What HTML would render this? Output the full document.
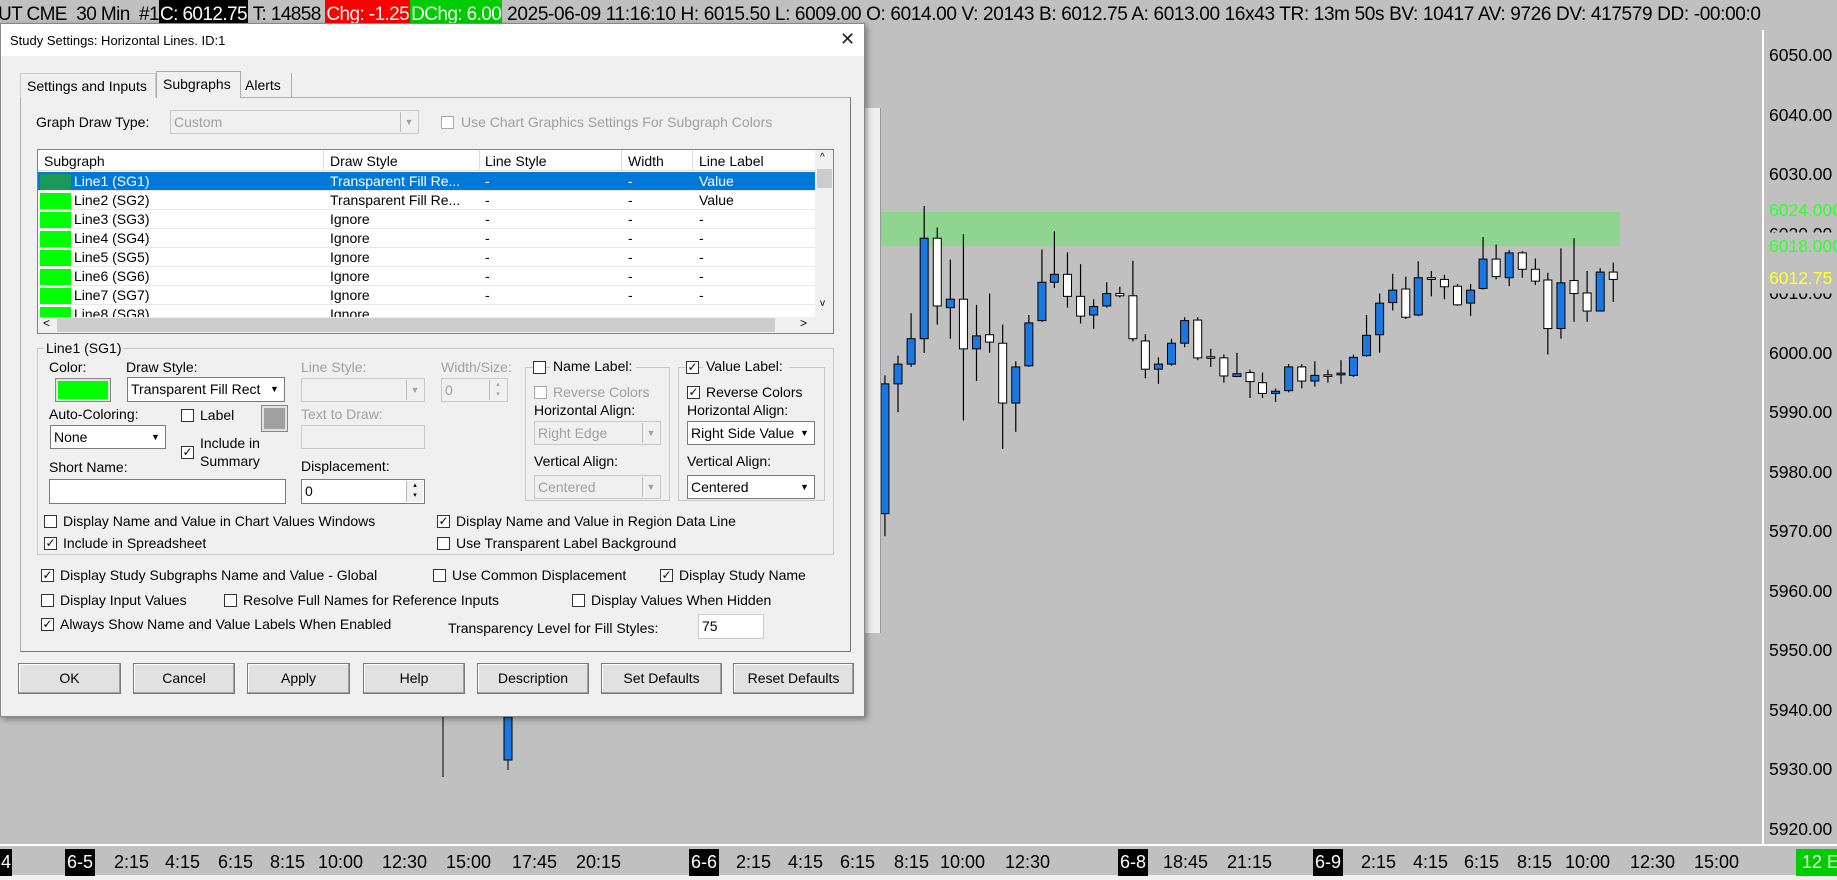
<!DOCTYPE html>
<html><head><meta charset="utf-8">
<style>
*{box-sizing:border-box;margin:0;padding:0}
body{width:1837px;height:880px;overflow:hidden;background:#c0c0c0;font-family:"Liberation Sans",sans-serif;position:relative}
.a{position:absolute;white-space:nowrap}
.topl{position:absolute;left:-2px;top:0;height:30px;font-size:19px;line-height:30px;white-space:nowrap;width:1763px;overflow:hidden}
.topl span{display:inline-block;height:30px}
.px{font-size:17.5px;color:#000}
.tl{font-size:18px;top:852px;color:#000}
.dlg{position:absolute;left:0;top:23px;width:865px;height:694px;background:#f0f0f0;border:1px solid #888;box-shadow:2px 2px 6px rgba(0,0,0,.4)}
.d{font-size:14px;color:#000}
.g{color:#a0a0a0}
.cb{position:absolute;width:13px;height:13px;border:1px solid #333;background:#fff;font-size:12px;line-height:11px;text-align:center}
.cbg{border-color:#aaa}
.box{position:absolute;background:#fff;border:1px solid #7a7a7a;font-size:14px;line-height:22px;padding-left:3px}
.dis{background:#f0f0f0;border-color:#c8c8c8;color:#a0a0a0}
.arr{position:absolute;right:1px;top:1px;bottom:1px;width:17px;background:#f0f0f0;border-left:1px solid #bbb;font-size:9px;text-align:center;line-height:20px}
.btn{position:absolute;top:663px;height:31px;background:#e1e1e1;border:1px solid #7a7a7a;box-shadow:inset -1px -1px 0 #a0a0a0,inset 1px 1px 0 #fff;font-size:14px;text-align:center;line-height:29px}
.row{position:absolute;left:38px;width:777px;height:19px;font-size:14px;line-height:19px;border-bottom:1px solid #e8e8e8}
.row span{position:absolute}
.sw{position:absolute;left:2px;top:2px;width:31px;height:16px;background:#00ff00}
</style></head><body>
<svg class="a" style="left:0;top:0" width="1837" height="880" id="ch">
<rect x="881" y="212" width="739" height="34" fill="#8fd48f"/>
<line x1="1763" y1="30" x2="1763" y2="845" stroke="#fff" stroke-width="2"/>
<line x1="0" y1="845" x2="1837" y2="845" stroke="#fff" stroke-width="2"/>
<rect x="0" y="875" width="1837" height="5" fill="#f0f0f0"/>
<line x1="443" y1="717" x2="443" y2="777" stroke="#000"/>
<line x1="508" y1="717" x2="508" y2="770" stroke="#000"/>
<rect x="504" y="717" width="8" height="43" fill="#1b78e0" stroke="#000"/>
</svg>
<!-- top bar -->
<div class="topl"><span style="letter-spacing:-0.6px">UT CME&nbsp; 30 Min&nbsp; #1</span><span style="background:#000;color:#fff;letter-spacing:-0.6px;padding:0 1px">C: 6012.75</span><span style="letter-spacing:-0.6px">&nbsp;T: 14858&nbsp;</span><span style="background:#f00;color:#fff;letter-spacing:-0.6px;padding:0 1px">Chg: -1.25</span><span style="background:#0c0;color:#fff;letter-spacing:-0.6px;padding:0 1px">DChg: 6.00</span><span style="letter-spacing:-0.35px">&nbsp;2025-06-09 11:16:10 H: 6015.50 L: 6009.00 O: 6014.00 V: 20143 B: 6012.75 A: 6013.00 16x43 TR: 13m 50s BV: 10417 AV: 9726 DV: 417579 DD: -00:00:00 Hor</span></div>
<!-- price labels -->
<div class="a px" style="left:1769px;top:45px">6050.00</div>
<div class="a px" style="left:1769px;top:105px">6040.00</div>
<div class="a px" style="left:1769px;top:164px">6030.00</div>
<div class="a px" style="left:1769px;top:224px;clip-path:inset(0 0 60% 0)">6020.00</div>
<div class="a px" style="left:1769px;top:283px;clip-path:inset(50% 0 0 0)">6010.00</div>
<div class="a px" style="left:1769px;top:200px;color:#33ff33">6024.000</div>
<div class="a px" style="left:1769px;top:236px;color:#33ff33">6018.000</div>
<div class="a px" style="left:1769px;top:268px;color:#ffff33">6012.75</div>
<div class="a px" style="left:1769px;top:343px">6000.00</div>
<div class="a px" style="left:1769px;top:402px">5990.00</div>
<div class="a px" style="left:1769px;top:462px">5980.00</div>
<div class="a px" style="left:1769px;top:521px">5970.00</div>
<div class="a px" style="left:1769px;top:581px">5960.00</div>
<div class="a px" style="left:1769px;top:640px">5950.00</div>
<div class="a px" style="left:1769px;top:700px">5940.00</div>
<div class="a px" style="left:1769px;top:759px">5930.00</div>
<div class="a px" style="left:1769px;top:819px">5920.00</div>
<!-- time labels -->
<div class="a tl" style="left:0;top:849px;background:#000;color:#fff;height:27px;line-height:27px;padding:0 1px">4</div>
<div class="a tl" style="left:65px;top:849px;background:#000;color:#fff;height:27px;line-height:27px;padding:0 2px">6-5</div>
<div class="a tl" style="left:114px">2:15</div><div class="a tl" style="left:165px">4:15</div><div class="a tl" style="left:218px">6:15</div><div class="a tl" style="left:270px">8:15</div><div class="a tl" style="left:318px">10:00</div><div class="a tl" style="left:382px">12:30</div><div class="a tl" style="left:446px">15:00</div><div class="a tl" style="left:512px">17:45</div><div class="a tl" style="left:576px">20:15</div>
<div class="a tl" style="left:689px;top:849px;background:#000;color:#fff;height:27px;line-height:27px;padding:0 2px">6-6</div>
<div class="a tl" style="left:736px">2:15</div><div class="a tl" style="left:788px">4:15</div><div class="a tl" style="left:840px">6:15</div><div class="a tl" style="left:894px">8:15</div><div class="a tl" style="left:940px">10:00</div><div class="a tl" style="left:1005px">12:30</div>
<div class="a tl" style="left:1118px;top:849px;background:#000;color:#fff;height:27px;line-height:27px;padding:0 2px">6-8</div>
<div class="a tl" style="left:1163px">18:45</div><div class="a tl" style="left:1227px">21:15</div>
<div class="a tl" style="left:1313px;top:849px;background:#000;color:#fff;height:27px;line-height:27px;padding:0 2px">6-9</div>
<div class="a tl" style="left:1361px">2:15</div><div class="a tl" style="left:1413px">4:15</div><div class="a tl" style="left:1464px">6:15</div><div class="a tl" style="left:1517px">8:15</div><div class="a tl" style="left:1565px">10:00</div><div class="a tl" style="left:1630px">12:30</div><div class="a tl" style="left:1694px">15:00</div>
<div class="a tl" style="left:1796px;top:849px;background:#0c0;color:#fff;height:27px;line-height:27px;padding-left:6px;width:41px">12 E</div>
<!-- background dialog -->
<div class="a" style="left:863px;top:108px;width:18px;height:525px;background:#f0f0f0;border-right:1px solid #999"></div>
<!-- dialog -->
<div class="dlg">
 <div class="a" style="left:0;top:0;width:863px;height:32px;background:#fff"></div>
 <div class="a d" style="left:9px;top:9px;font-size:13px">Study Settings: Horizontal Lines. ID:1</div>
 <div class="a" style="left:839px;top:5px;font-size:18px;color:#222">✕</div>
</div>
<div class="a" style="left:20px;top:97px;width:831px;height:555px;border:1px solid #adadad;border-right-color:#777;border-bottom-color:#777;background:#f0f0f0"></div>
<div class="a d" style="left:20px;top:73px;width:136px;height:25px;border:1px solid #ccc;border-bottom:none;background:#f0f0f0;padding:4px 0 0 6px">Settings and Inputs</div>
<div class="a d" style="left:156px;top:71px;width:85px;height:27px;border:1px solid #adadad;border-bottom:none;background:#f0f0f0;padding:4px 0 0 6px">Subgraphs</div>
<div class="a d" style="left:241px;top:73px;width:51px;height:25px;border-right:1px solid #adadad;padding:4px 0 0 4px">Alerts</div>
<div class="a d" style="left:36px;top:114px">Graph Draw Type:</div>
<div class="box dis" style="left:170px;top:110px;width:249px;height:24px">Custom<div class="arr">▼</div></div>
<div class="cb cbg" style="left:441px;top:116px"></div>
<div class="a d g" style="left:461px;top:114px">Use Chart Graphics Settings For Subgraph Colors</div>
<!-- list -->
<div class="a" style="left:37px;top:149px;width:797px;height:185px;background:#fff;border:1px solid #828282"></div>
<div class="a" style="left:38px;top:150px;width:777px;height:21px;border-bottom:1px solid #ddd"></div>
<div class="a d" style="left:44px;top:153px">Subgraph</div>
<div class="a" style="left:323px;top:150px;width:1px;height:21px;background:#ddd"></div>
<div class="a d" style="left:330px;top:153px">Draw Style</div>
<div class="a" style="left:479px;top:150px;width:1px;height:21px;background:#ddd"></div>
<div class="a d" style="left:485px;top:153px">Line Style</div>
<div class="a" style="left:621px;top:150px;width:1px;height:21px;background:#ddd"></div>
<div class="a d" style="left:628px;top:153px">Width</div>
<div class="a" style="left:692px;top:150px;width:1px;height:21px;background:#ddd"></div>
<div class="a d" style="left:699px;top:153px">Line Label</div>
<div class="a" style="left:815px;top:150px;width:18px;height:167px;background:#f0f0f0"></div>
<div class="a" style="left:817px;top:169px;width:15px;height:19px;background:#ccc"></div>
<div class="a" style="left:820px;top:152px;font-size:10px">^</div>
<div class="a" style="left:820px;top:298px;font-size:10px">v</div>
<div class="a" style="left:38px;top:317px;width:795px;height:16px;background:#f0f0f0"></div>
<div class="a" style="left:57px;top:318px;width:718px;height:14px;background:#cdcdcd"></div>
<div class="a" style="left:43px;top:316px;font-size:12px">&lt;</div>
<div class="a" style="left:800px;top:316px;font-size:12px">&gt;</div>
<div class="row" style="top:172px;background:#0078d7;color:#fff"><div class="sw" style="background:#1a9a5a"></div><span style="left:36px">Line1 (SG1)</span><span style="left:292px">Transparent Fill Re...</span><span style="left:447px">-</span><span style="left:590px">-</span><span style="left:661px">Value</span></div>
<div class="row" style="top:191px"><div class="sw"></div><span style="left:36px">Line2 (SG2)</span><span style="left:292px">Transparent Fill Re...</span><span style="left:447px">-</span><span style="left:590px">-</span><span style="left:661px">Value</span></div>
<div class="row" style="top:210px"><div class="sw"></div><span style="left:36px">Line3 (SG3)</span><span style="left:292px">Ignore</span><span style="left:447px">-</span><span style="left:590px">-</span><span style="left:661px">-</span></div>
<div class="row" style="top:229px"><div class="sw"></div><span style="left:36px">Line4 (SG4)</span><span style="left:292px">Ignore</span><span style="left:447px">-</span><span style="left:590px">-</span><span style="left:661px">-</span></div>
<div class="row" style="top:248px"><div class="sw"></div><span style="left:36px">Line5 (SG5)</span><span style="left:292px">Ignore</span><span style="left:447px">-</span><span style="left:590px">-</span><span style="left:661px">-</span></div>
<div class="row" style="top:267px"><div class="sw"></div><span style="left:36px">Line6 (SG6)</span><span style="left:292px">Ignore</span><span style="left:447px">-</span><span style="left:590px">-</span><span style="left:661px">-</span></div>
<div class="row" style="top:286px"><div class="sw"></div><span style="left:36px">Line7 (SG7)</span><span style="left:292px">Ignore</span><span style="left:447px">-</span><span style="left:590px">-</span><span style="left:661px">-</span></div>
<div class="row" style="top:305px;height:12px;overflow:hidden;border:none"><div class="sw"></div><span style="left:36px">Line8 (SG8)</span><span style="left:292px">Ignore</span></div>
<!-- group -->
<div class="a" style="left:37px;top:348px;width:797px;height:207px;border:1px solid #c8c8c8"></div>
<div class="a d" style="left:44px;top:340px;background:#f0f0f0;padding:0 2px">Line1 (SG1)</div>
<div class="a d" style="left:49px;top:359px">Color:</div>
<div class="a" style="left:55px;top:378px;width:56px;height:24px;background:#00ff00;border:1px solid #888;box-shadow:inset 0 0 0 2px #e1e1e1"></div>
<div class="a d" style="left:126px;top:359px">Draw Style:</div>
<div class="box" style="left:127px;top:377px;width:158px;height:25px">Transparent Fill Rect<div class="arr" style="background:#fff;border:none">▼</div></div>
<div class="a d g" style="left:301px;top:359px">Line Style:</div>
<div class="box dis" style="left:301px;top:378px;width:124px;height:24px"><div class="arr">▼</div></div>
<div class="a d g" style="left:441px;top:359px">Width/Size:</div>
<div class="box dis" style="left:441px;top:378px;width:67px;height:24px">0<div class="arr" style="font-size:7px;line-height:10px">▴<br>▾</div></div>
<div class="a" style="left:525px;top:367px;width:145px;height:134px;border:1px solid #c8c8c8"></div>
<div class="cb" style="left:533px;top:361px"></div>
<div class="a d" style="left:550px;top:358px;background:#f0f0f0;padding:0 4px 0 3px">Name Label:</div>
<div class="cb cbg" style="left:534px;top:386px"></div>
<div class="a d g" style="left:553px;top:384px">Reverse Colors</div>
<div class="a d" style="left:534px;top:402px">Horizontal Align:</div>
<div class="box dis" style="left:534px;top:421px;width:127px;height:24px">Right Edge<div class="arr">▼</div></div>
<div class="a d" style="left:534px;top:453px">Vertical Align:</div>
<div class="box dis" style="left:534px;top:475px;width:127px;height:24px">Centered<div class="arr">▼</div></div>
<div class="a" style="left:678px;top:367px;width:147px;height:134px;border:1px solid #c8c8c8"></div>
<div class="cb" style="left:686px;top:361px">✓</div>
<div class="a d" style="left:703px;top:358px;background:#f0f0f0;padding:0 6px 0 3px">Value Label:</div>
<div class="cb" style="left:687px;top:386px">✓</div>
<div class="a d" style="left:706px;top:384px">Reverse Colors</div>
<div class="a d" style="left:687px;top:402px">Horizontal Align:</div>
<div class="box" style="left:687px;top:421px;width:128px;height:24px;overflow:hidden">Right Side Value<div class="arr" style="background:#fff;border:none">▼</div></div>
<div class="a d" style="left:687px;top:453px">Vertical Align:</div>
<div class="box" style="left:687px;top:475px;width:128px;height:24px">Centered<div class="arr" style="background:#fff;border:none">▼</div></div>
<div class="a d" style="left:49px;top:406px">Auto-Coloring:</div>
<div class="box" style="left:50px;top:425px;width:116px;height:24px">None<div class="arr" style="background:#fff;border:none">▼</div></div>
<div class="cb" style="left:181px;top:409px"></div>
<div class="a d" style="left:200px;top:407px">Label</div>
<div class="a" style="left:262px;top:406px;width:25px;height:25px;background:#a0a0a0;border:2px solid #e1e1e1;outline:1px solid #888"></div>
<div class="cb" style="left:181px;top:446px">✓</div>
<div class="a d" style="left:200px;top:435px">Include in</div>
<div class="a d" style="left:200px;top:453px">Summary</div>
<div class="a d" style="left:49px;top:459px">Short Name:</div>
<div class="box" style="left:49px;top:479px;width:237px;height:25px"></div>
<div class="a d g" style="left:301px;top:406px">Text to Draw:</div>
<div class="box dis" style="left:301px;top:425px;width:124px;height:24px"></div>
<div class="a d" style="left:301px;top:458px">Displacement:</div>
<div class="box" style="left:301px;top:479px;width:124px;height:25px">0<div class="arr" style="font-size:7px;line-height:10px">▴<br>▾</div></div>
<div class="cb" style="left:44px;top:515px"></div><div class="a d" style="left:63px;top:513px">Display Name and Value in Chart Values Windows</div>
<div class="cb" style="left:437px;top:515px">✓</div><div class="a d" style="left:456px;top:513px">Display Name and Value in Region Data Line</div>
<div class="cb" style="left:44px;top:537px">✓</div><div class="a d" style="left:63px;top:535px">Include in Spreadsheet</div>
<div class="cb" style="left:437px;top:537px"></div><div class="a d" style="left:456px;top:535px">Use Transparent Label Background</div>
<div class="cb" style="left:41px;top:569px">✓</div><div class="a d" style="left:60px;top:567px">Display Study Subgraphs Name and Value - Global</div>
<div class="cb" style="left:433px;top:569px"></div><div class="a d" style="left:452px;top:567px">Use Common Displacement</div>
<div class="cb" style="left:660px;top:569px">✓</div><div class="a d" style="left:679px;top:567px">Display Study Name</div>
<div class="cb" style="left:41px;top:594px"></div><div class="a d" style="left:60px;top:592px">Display Input Values</div>
<div class="cb" style="left:224px;top:594px"></div><div class="a d" style="left:243px;top:592px">Resolve Full Names for Reference Inputs</div>
<div class="cb" style="left:572px;top:594px"></div><div class="a d" style="left:591px;top:592px">Display Values When Hidden</div>
<div class="cb" style="left:41px;top:618px">✓</div><div class="a d" style="left:60px;top:616px">Always Show Name and Value Labels When Enabled</div>
<div class="a d" style="left:448px;top:620px">Transparency Level for Fill Styles:</div>
<div class="box" style="left:698px;top:614px;width:66px;height:25px;border-color:#ccc">75</div>
<div class="btn" style="left:18px;width:103px">OK</div>
<div class="btn" style="left:133px;width:102px">Cancel</div>
<div class="btn" style="left:247px;width:103px">Apply</div>
<div class="btn" style="left:363px;width:102px">Help</div>
<div class="btn" style="left:477px;width:112px">Description</div>
<div class="btn" style="left:601px;width:121px">Set Defaults</div>
<div class="btn" style="left:733px;width:121px">Reset Defaults</div>
<script>
var C=[[40,680,910,665,950,1],[61,645,680,630,730,1],[82,600,645,555,650,1],[103,422,600,365,625,1],[124,422,542,403,575,0],[145,530,545,460,600,1],[166,530,618,415,745,0],[187,595,618,540,675,1],[208,593,606,520,625,0],[229,608,714,575,795,0],[250,650,714,640,765,1],[271,572,648,558,650,1],[292,500,568,442,570,1],[312,486,500,410,510,1],[333,486,525,447,545,0],[354,525,560,468,573,0],[375,543,558,530,583,1],[396,520,542,500,545,1],[417,520,524,508,527,0],[438,524,600,462,605,0],[458,604,654,592,670,0],[479,645,654,633,680,1],[500,608,645,600,648,1],[521,568,608,562,615,1],[542,567,634,562,638,0],[563,632,634,618,650,0],[584,634,666,628,678,0],[605,662,667,625,668,1],[626,660,676,655,705,0],[646,678,697,660,705,0],[667,693,697,688,712,1],[688,650,692,645,695,1],[709,650,675,645,688,0],[730,665,675,640,685,1],[751,664,666,655,678,0],[772,661,664,638,680,1],[792,633,665,628,668,1],[813,594,630,558,632,1],[834,537,593,520,625,1],[855,514,536,485,550,1],[876,512,562,490,565,0],[896,492,558,463,560,1],[917,492,495,480,525,0],[938,495,508,487,530,0],[959,507,540,503,542,0],[980,514,537,503,560,1],[1000,459,511,420,513,1],[1021,459,490,433,495,0],[1042,448,492,443,507,1],[1063,448,477,445,492,0],[1084,477,498,458,505,0],[1104,496,582,483,628,0],[1125,501,582,440,600,1],[1146,497,520,422,570,0],[1167,519,551,480,570,0],[1188,482,551,475,552,1],[1209,482,495,465,535,0]];
var s='',fx=function(v){return 860+v/1.605},fy=function(v){return v*0.5645};
C.forEach(function(c){var x=fx(c[0]);s+='<line x1="'+x+'" y1="'+fy(c[3])+'" x2="'+x+'" y2="'+fy(c[4])+'" stroke="#000" stroke-width="1.2"/>';var h=Math.max(1.5,fy(c[2])-fy(c[1]));s+='<rect x="'+(x-4)+'" y="'+fy(c[1])+'" width="8" height="'+h+'" fill="'+(c[5]?'#1b78e0':'#fff')+'" stroke="#000" stroke-width="1"/>';});
document.getElementById('ch').insertAdjacentHTML('beforeend',s);
</script>
</body></html>
